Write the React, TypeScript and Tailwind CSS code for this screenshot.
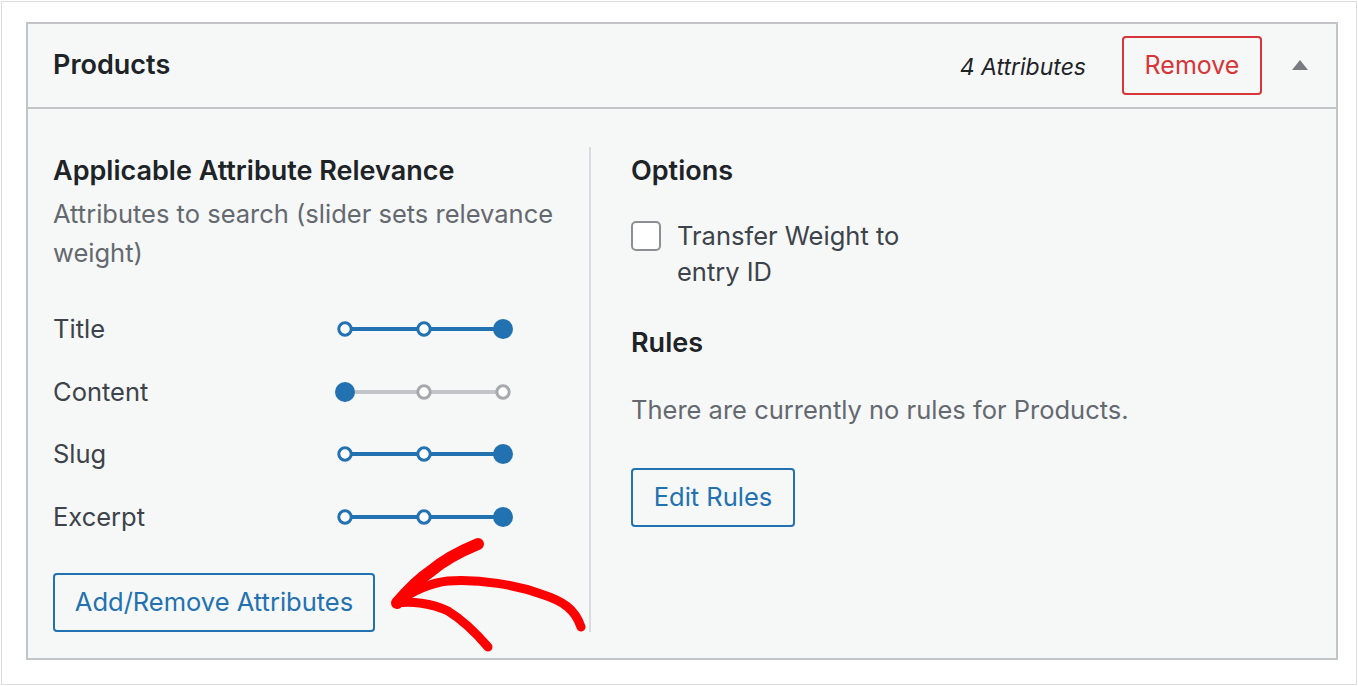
import React from 'react';

const font = { fontFamily: 'Inter, "Liberation Sans", sans-serif' };

type Level = 0 | 1 | 2;

function WeightSlider({ value }: { value: Level }) {
    const xs = [10, 89, 168];
    const active = value > 0;
    const line = active ? '#2271b1' : '#c3c4c7';
    return (
        <svg width="180" height="24" viewBox="0 0 180 24" className="block">
            <line x1="10" y1="12" x2="168" y2="12" stroke={line} strokeWidth="4" />
            {xs.map((x, i) =>
                i === value ? (
                    <circle key={i} cx={x} cy="12" r="10" fill="#2271b1" />
                ) : (
                    <circle key={i} cx={x} cy="12" r="6.2" fill="#fff" stroke={active ? '#2271b1' : '#a7aaad'} strokeWidth="3" />
                )
            )}
        </svg>
    );
}

const attributes: { name: string; level: Level }[] = [
    { name: 'Title', level: 2 },
    { name: 'Content', level: 0 },
    { name: 'Slug', level: 2 },
    { name: 'Excerpt', level: 2 },
];

export default function App() {
    return (
        <div className="min-h-screen bg-white" style={font}>
            <div className="relative ml-px mt-px w-[1356px] h-[684px] border border-[#dcdcde] pl-[24px] pt-[20px]">
                {/* Product engine card */}
                <div className="w-[1312px] h-[638px] border-2 border-[#c3c4c7] bg-[#f6f7f7] flex flex-col">
                    <div className="h-[85px] border-b-2 border-[#c3c4c7] flex items-center pl-[25px] pr-[28px]">
                        <h2 className="text-[27px] font-semibold text-[#1d2327]">Products</h2>
                        <div className="ml-auto flex items-center">
                            <span className="text-[23px] italic text-[#1d2327] mt-[4px]">4 Attributes</span>
                            <button className="ml-[36px] h-[59px] w-[140px] rounded-[4px] border-2 border-[#d63638] text-[25px] text-[#d63638]">Remove</button>
                            <span className="ml-[30px] w-0 h-0 border-l-[8px] border-r-[8px] border-b-[10px] border-l-transparent border-r-transparent border-b-[#787c82] mt-[-2px]"></span>
                        </div>
                    </div>

                    <div className="flex pt-[38px] pl-[25px]">
                        {/* Attributes column */}
                        <div className="w-[538px] border-r-2 border-[#dcdcde] h-[485px]">
                            <h3 className="mt-[2px] h-[44px] leading-[44px] text-[27px] font-semibold text-[#1d2327]">Applicable Attribute Relevance</h3>
                            <p className="mt-[1px] w-[520px] text-[25.5px] leading-[39px] text-[#646970]">Attributes to search (slider sets relevance weight)</p>
                            <div className="mt-[26px]">
                                {attributes.map(a => (
                                    <div key={a.name} className="h-[62.5px] flex items-center">
                                        <span className="w-[282px] text-[25.5px] text-[#3c434a]">{a.name}</span>
                                        <WeightSlider value={a.level} />
                                    </div>
                                ))}
                            </div>
                            <button className="mt-[25px] h-[59px] w-[322px] rounded-[4px] border-2 border-[#2271b1] text-[25.5px] text-[#2271b1] bg-[#f6f7f7]">Add/Remove Attributes</button>
                        </div>

                        {/* Options column */}
                        <div className="pl-[40px]">
                            <h3 className="mt-[2px] h-[44px] leading-[44px] text-[27px] font-semibold text-[#1d2327]">Options</h3>
                            <label className="mt-[25px] flex items-start">
                                <span className="mt-[3px] w-[30px] h-[30px] rounded-[5px] border-2 border-[#8c8f94] bg-white shrink-0"></span>
                                <span className="ml-[16px] w-[260px] text-[25.5px] leading-[36px] text-[#3c434a]">Transfer Weight to entry ID</span>
                            </label>
                            <h3 className="mt-[31px] h-[44px] leading-[44px] text-[27px] font-semibold text-[#1d2327]">Rules</h3>
                            <p className="mt-[25px] text-[25.5px] leading-[39px] text-[#646970]">There are currently no rules for Products.</p>
                            <button className="mt-[39px] h-[59px] w-[164px] rounded-[4px] border-2 border-[#2271b1] text-[25.5px] text-[#2271b1]">Edit Rules</button>
                        </div>
                    </div>
                </div>

                {/* red annotation arrow */}
                <svg className="absolute left-0 top-0 pointer-events-none" width="1356" height="684" viewBox="1 1 1356 684">
                    <g fill="none" stroke="#ff0000" strokeLinecap="round" strokeLinejoin="round">
                        <path d="M580 626 C574 608 562 600 540 593 C515 584 480 578 447 580 C428 582 412 590 396 601" strokeWidth="9" />
                        <path d="M396 602 C408 588 418 578 430 570 C444 558 460 550 477 543" strokeWidth="12" />
                        <path d="M396 602 C410 600 430 602 447 610 C460 618 475 632 487 646" strokeWidth="9" />
                    </g>
                </svg>
            </div>
        </div>
    );
}
